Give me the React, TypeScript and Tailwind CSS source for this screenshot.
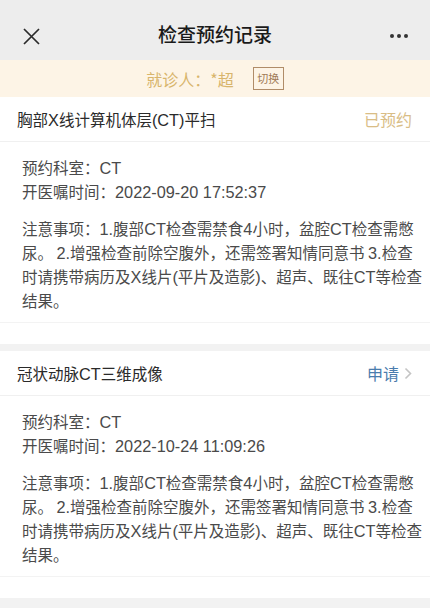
import React from "react";

const FONT = { fontFamily: '"Noto Sans CJK SC", "Noto Sans", sans-serif' };

function Mixed({ text }: { text: string }) {
  const parts = text.split(/([A-Za-z0-9.:\-()]+(?: [A-Za-z0-9.:\-()]+)*)/);
  return (
    <>
      {parts.map((p, i) =>
        i % 2 === 1 ? (
          <span
            key={i}
            className="text-[16.3px] leading-[14px]"
            style={{ fontFamily: '"Liberation Sans", sans-serif' }}
          >
            {p}
          </span>
        ) : (
          <React.Fragment key={i}>{p}</React.Fragment>
        )
      )}
    </>
  );
}

type Card = {
  title: string;
  status: "booked" | "apply";
  time: string;
};

const notes = [
  "注意事项：1.腹部CT检查需禁食4小时，盆腔CT检查需憋",
  "尿。 2.增强检查前除空腹外，还需签署知情同意书 3.检查",
  "时请携带病历及X线片(平片及造影)、超声、既往CT等检查",
  "结果。",
];

function RecordCard({ c }: { c: Card }) {
  return (
    <div className="bg-white">
      <div className="flex items-center justify-between h-[45px] pl-[17px] pr-[18px] border-b border-[#f0f0f0]">
        <span className="text-[15.5px] leading-[20px] text-[#2a2a2a]">
          <Mixed text={c.title} />
        </span>
        {c.status === "booked" ? (
          <span className="text-[16px] text-[#d9bd86]">已预约</span>
        ) : (
          <span className="flex items-center gap-[5px] text-[16px] text-[#4a7cad]">
            申请
            <svg width="8" height="13" viewBox="0 0 8 13" fill="none">
              <path d="M1.5 1.5L6.5 6.5L1.5 11.5" stroke="#c4c4c4" strokeWidth="1.6" />
            </svg>
          </span>
        )}
      </div>
      <div className="pl-[22px] pr-[10px] pt-[13px] pb-[10px] text-[15.5px] leading-[24px] text-[#4a4a4a] border-b border-[#f3f3f3]">
        <div className="h-[24px]">
          <Mixed text="预约科室：CT" />
        </div>
        <div className="h-[24px]">
          <Mixed text={"开医嘱时间：" + c.time} />
        </div>
        <div className="mt-[13px] whitespace-nowrap">
          {notes.map((l, i) => (
            <div key={i} className="h-[24px]">
              <Mixed text={l} />
            </div>
          ))}
        </div>
      </div>
      <div className="h-[21px]" />
    </div>
  );
}

export default function App() {
  const cards: Card[] = [
    { title: "胸部X线计算机体层(CT)平扫", status: "booked", time: "2022-09-20 17:52:37" },
    { title: "冠状动脉CT三维成像", status: "apply", time: "2022-10-24 11:09:26" },
  ];
  return (
    <div className="w-[430px] h-[608px] overflow-hidden bg-[#f2f2f2]" style={FONT}>
      <div className="relative flex items-center justify-center h-[60px] bg-[#ededed]">
        <svg className="absolute left-[23px] top-[28px]" width="17" height="17" viewBox="0 0 17 17">
          <path d="M1 1L16 16M16 1L1 16" stroke="#2b2b2b" strokeWidth="1.7" />
        </svg>
        <span className="text-[19px] font-medium text-[#1a1a1a] mt-[8px]">检查预约记录</span>
        <div className="absolute right-[22px] top-[34px] flex gap-[3px]">
          <span className="w-[4px] h-[4px] rounded-full bg-[#333]" />
          <span className="w-[4px] h-[4px] rounded-full bg-[#333]" />
          <span className="w-[4px] h-[4px] rounded-full bg-[#333]" />
        </div>
      </div>
      <div className="flex items-center justify-center gap-[19px] h-[37px] bg-[#fdf4e6]">
        <span className="text-[16px] text-[#d8b56c]">就诊人：*超</span>
        <span className="flex items-center justify-center w-[31px] h-[23px] border border-[#b08c68] text-[11px] text-[#a07a55]">
          切换
        </span>
      </div>
      <RecordCard c={cards[0]} />
      <div className="h-[7px]" />
      <RecordCard c={cards[1]} />
    </div>
  );
}
